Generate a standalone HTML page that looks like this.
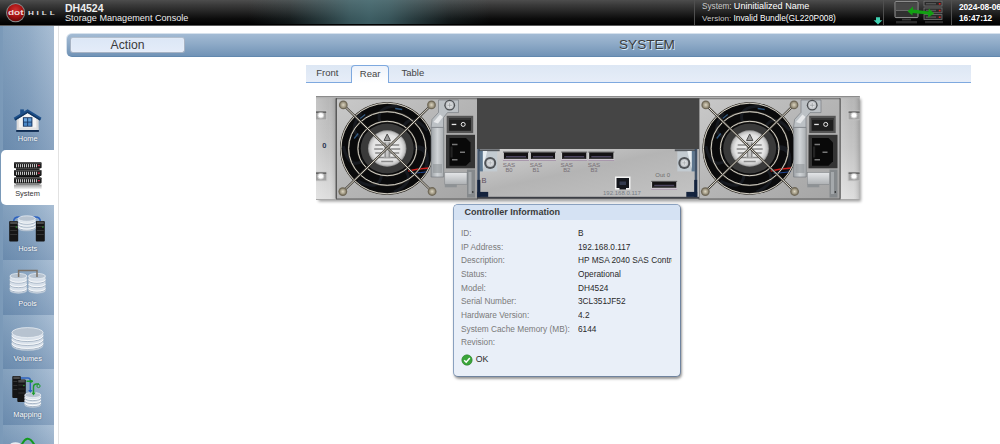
<!DOCTYPE html>
<html><head><meta charset="utf-8">
<style>
*{box-sizing:border-box;margin:0;padding:0}
html,body{width:1000px;height:444px;overflow:hidden;background:#fff;font-family:"Liberation Sans",sans-serif;}
#hdr{position:absolute;left:0;top:0;width:1000px;height:26px;border-bottom:1px solid #5a5a5a;background:linear-gradient(#4d4d4d 0%,#3a3a3a 20%,#262626 45%,#0c0c0c 75%,#000 100%);color:#fff;overflow:hidden}
#hdr .t1{position:absolute;left:65px;top:1.6px;font-size:10.5px;font-weight:bold;line-height:12px;color:#eee;white-space:nowrap}
#hdr .t2{position:absolute;left:65px;top:12.7px;font-size:9.1px;line-height:11px;color:#eee;white-space:nowrap}
.sep{position:absolute;top:0;width:1px;height:25px;background:#4f4f4f}
.hl{position:absolute;line-height:11px;white-space:nowrap}
#side{position:absolute;left:0;top:26px;width:54px;height:418px;background:linear-gradient(90deg,#7a99b8 0%,#8aa6c2 50%,#a5bbd2 100%);}
.nb{position:absolute;left:3px;width:51px;background:linear-gradient(rgba(255,255,255,.06),rgba(40,80,130,.22));}
#sel{position:absolute;left:1px;top:150px;width:57px;height:55px;background:#fff;border-radius:5px 0 0 5px}
#vline{position:absolute;left:58px;top:26px;width:1px;height:418px;background:#e2e2e2}
.nl{position:absolute;width:60px;text-align:center;font-size:7.4px;line-height:10px;white-space:nowrap}
#abar0{position:absolute;left:66px;top:33px;width:940px;height:24px;border-radius:6px;background:#a5bdd5;opacity:.45}
#abar{position:absolute;left:67px;top:34px;width:940px;height:23px;border-radius:5px;background:linear-gradient(#a3bbd4 0%,#8eaac7 45%,#7193b6 100%);border-bottom:1px solid #6288ae}
#abtn{position:absolute;left:70px;top:37px;width:115px;height:16px;border-radius:3px;background:linear-gradient(#dce7f6,#e4ecf9);border:1px solid #a7b3c4;border-top-color:#b3bfce;box-shadow:inset 0 0 1px #fff;text-align:center;font-size:12.2px;line-height:14.5px;color:#3a3a3a}
#stitle{position:absolute;left:597px;top:37px;width:100px;text-align:center;font-size:13.6px;line-height:16px;color:#3c3c3c;text-shadow:.7px .7px 0 #d8ecfb}
#tabs{position:absolute;left:306px;top:65px;width:665px;height:18px;background:linear-gradient(#dde7f4,#e6edf8);border-bottom:1px solid #7ea9df}
#atab{position:absolute;left:351px;top:65px;width:38px;height:18px;border:1px solid #7ea9df;border-bottom:none;border-radius:4px 4px 0 0;background:linear-gradient(#edf2fa,#fff)}
.tab{position:absolute;font-size:9.5px;line-height:11px;color:#444;white-space:nowrap}
#rear{position:absolute;left:316px;top:96px}
#pop{position:absolute;left:453px;top:204px;width:228px;height:173px;border:1px solid #8aa1bf;border-right-color:#6f839e;border-bottom-color:#6f839e;border-radius:5px;background:#e9eff8;box-shadow:1px 1.5px 2.5px rgba(0,0,0,.4);overflow:hidden}
#pop .h{height:15px;background:#d5e2f3;font-weight:bold;font-size:9.05px;line-height:14px;color:#3a3a3a;padding-left:10.5px;white-space:nowrap}
.row{position:absolute;left:7px;font-size:8.3px;line-height:10px;color:#7a7a7a;white-space:nowrap}
.val{position:absolute;left:124px;width:94px;overflow:hidden;font-size:8.3px;line-height:10px;color:#2a2a2a;white-space:nowrap}
</style></head><body>
<div id="hdr">
<svg style="position:absolute;left:0;top:0" width="62" height="25" viewBox="0 0 62 25">
<defs><radialGradient id="lg" cx=".5" cy=".35" r=".65"><stop offset="0" stop-color="#cf3030"/><stop offset=".6" stop-color="#a51212"/><stop offset="1" stop-color="#640909"/></radialGradient></defs>
<circle cx="15.6" cy="12.7" r="9.6" fill="#8a8a8a"/><circle cx="15.6" cy="12.7" r="8.6" fill="url(#lg)"/>
<text transform="translate(15.7,15.2) scale(1.32,1)" font-family="Liberation Sans, sans-serif" font-weight="bold" font-size="7.6" fill="#ecd6d6" text-anchor="middle">dot</text>
<g font-family="Liberation Sans, sans-serif" font-weight="bold" font-size="6" fill="#e4e4e4" text-anchor="middle"><text transform="translate(30.8,15) scale(1.35,1)">H</text><text transform="translate(37.6,15) scale(1.35,1)">I</text><text transform="translate(44.2,15) scale(1.35,1)">L</text><text transform="translate(52.2,15) scale(1.35,1)">L</text></g>
</svg>
<div style="position:absolute;left:248px;top:0;width:242px;height:24px;background:linear-gradient(90deg,rgba(83,129,137,0) 0,rgba(83,129,137,.14) 17%,rgba(83,129,137,.42) 32%,rgba(83,129,137,.63) 42%,rgba(83,129,137,.7) 50%,rgba(83,129,137,.63) 58%,rgba(83,129,137,.42) 68%,rgba(83,129,137,.14) 83%,rgba(83,129,137,0) 100%)"></div><div style="position:absolute;left:0;top:24px;width:1000px;height:1px;background:#000"></div><div class="t1">DH4524</div><div class="t2">Storage Management Console</div>
<div class="sep" style="left:694px"></div><div class="sep" style="left:883px"></div><div class="sep" style="left:951px"></div>
<div class="hl" style="left:702px;top:1px;font-size:8.2px;color:#c8c8c8">System: <span style="font-size:9.05px;color:#fff">Uninitialized Name</span></div>
<div class="hl" style="left:702px;top:12.6px;font-size:8.1px;color:#c8c8c8">Version: <span style="font-size:8.33px;color:#fff">Invalid Bundle(GL220P008)</span></div>
<svg style="position:absolute;left:873px;top:17px" width="10" height="8" viewBox="0 0 10 8"><path d="M3,0.3 h4 v3 h2.4 L5,7.6 L0.6,3.3 h2.4 z" fill="#3fd0b0"/></svg>
<svg style="position:absolute;left:890px;top:0" width="60" height="25" viewBox="0 0 60 25">
<rect x="5" y="1.6" width="23" height="16" rx="1" fill="#303030" stroke="#959595" stroke-width="1"/>
<rect x="6" y="2.6" width="21" height="7.5" fill="#484848"/><rect x="6" y="10" width="21" height="1" fill="#6a6a6a"/>
<rect x="12" y="18.8" width="9" height="1.6" fill="#3a3a3a"/><rect x="6" y="21" width="21" height="2.4" fill="#2c2c2c"/>
<g fill="#2b2b2b" stroke="#777" stroke-width=".8"><rect x="34" y="1.2" width="18" height="4.8"/><rect x="34" y="8" width="18" height="4.8"/><rect x="34" y="14.6" width="18" height="4.8"/></g>
<rect x="35" y="21" width="18" height="2.2" fill="#2c2c2c"/>
<g fill="#e02020"><rect x="48.8" y="3" width="1.8" height="1.6"/><rect x="48.8" y="9.8" width="1.8" height="1.6"/><rect x="48.8" y="16.4" width="1.8" height="1.6"/></g>
<g fill="#555"><rect x="36" y="3" width="10" height="1.4"/><rect x="36" y="9.8" width="10" height="1.4"/><rect x="36" y="16.4" width="10" height="1.4"/></g>
<path d="M17.5,11.2 L23,6.6 L23,9.6 L38.5,11.4 L38.8,8.6 L44.2,13.6 L38,17.6 L38.2,14.6 L22.6,12.9 L22.4,15.6 Z" fill="#12a012"/>
</svg>
<div class="hl" style="left:959px;top:1.5px;font-size:8.4px;color:#fff;font-weight:bold;letter-spacing:-.1px">2024-08-06</div>
<div class="hl" style="left:959px;top:13px;font-size:8.3px;color:#fff;font-weight:bold">16:47:12</div>
</div>
<div id="side">
<div class="nb" style="top:0;height:124px"></div>
<div class="nb" style="top:179px;height:54.5px"></div>
<div class="nb" style="top:233.5px;height:55px"></div>
<div class="nb" style="top:288.5px;height:54.5px"></div>
<div class="nb" style="top:343px;height:55.5px"></div>
<div class="nb" style="top:398.5px;height:40px"></div>
</div>
<div id="sel"></div>
<div id="vline"></div>
<svg style="position:absolute;left:0;top:0" width="60" height="444" viewBox="0 0 60 444">
<defs><linearGradient id="refl" x1="0" x2="0" y1="0" y2="1"><stop offset="0" stop-color="#999"/><stop offset="1" stop-color="#fff"/></linearGradient></defs>
<rect x="20.2" y="109.4" width="3.7" height="5" fill="#1c4f8a"/><path d="M16.8,119 L27.6,112.6 L38.4,119 V129.9 H16.8 Z" fill="#f3f3f3"/><path d="M16.8,119 h2 v10.9 h-2 z M36.4,119 h2 v10.9 h-2 z" fill="#cfcfcf" opacity=".7"/><path d="M16.8,127.5 H38.4 V129.9 H16.8 Z" fill="#dcdcdc" opacity=".7"/><path d="M27.6,109.2 L13.7,117.7 L15.3,120.4 L27.6,113 L39.9,120.4 L41.5,117.7 Z" fill="#1c4f8a"/><path d="M14.6,119.2 L15.3,120.4 L27.6,113 L39.9,120.4 L40.6,119.2 L27.6,111.6 Z" fill="#123660"/><rect x="16.2" y="130" width="22.7" height="1.9" fill="#0f2c52"/><rect x="22.9" y="117.2" width="9.5" height="9.5" fill="#1a3a66"/><rect x="23.9" y="118.2" width="3.3" height="3.4" fill="#6aa6e0"/><rect x="28.1" y="118.2" width="3.3" height="3.4" fill="#5f9dd8"/><rect x="23.9" y="122.5" width="3.3" height="3.3" fill="#4a88c6"/><rect x="28.1" y="122.5" width="3.3" height="3.3" fill="#4a88c6"/><rect x="14" y="162.3" width="27.6" height="6" rx="0.8" fill="#1c1c1c"/><rect x="14.4" y="162.5" width="26.8" height="1.1" fill="#4e4e4e"/><rect x="16.0" y="164.10000000000002" width="1" height="3.2" fill="#c4c4c4"/><rect x="18.0" y="164.10000000000002" width="1" height="3.2" fill="#c4c4c4"/><rect x="20.0" y="164.10000000000002" width="1" height="3.2" fill="#c4c4c4"/><rect x="22.0" y="164.10000000000002" width="1" height="3.2" fill="#c4c4c4"/><rect x="24.0" y="164.10000000000002" width="1" height="3.2" fill="#c4c4c4"/><rect x="26.0" y="164.10000000000002" width="1" height="3.2" fill="#c4c4c4"/><rect x="28.0" y="164.10000000000002" width="1" height="3.2" fill="#c4c4c4"/><rect x="30.0" y="164.10000000000002" width="1" height="3.2" fill="#c4c4c4"/><rect x="32.0" y="164.10000000000002" width="1" height="3.2" fill="#c4c4c4"/><rect x="34.0" y="164.10000000000002" width="1" height="3.2" fill="#c4c4c4"/><rect x="36.0" y="164.10000000000002" width="1" height="3.2" fill="#c4c4c4"/><rect x="37.9" y="164.9" width="1.9" height="1.3" fill="#d22f4c"/><rect x="16" y="168.3" width="23.6" height="1.6" fill="#0e0e0e"/><rect x="14" y="169.9" width="27.6" height="6" rx="0.8" fill="#1c1c1c"/><rect x="14.4" y="170.1" width="26.8" height="1.1" fill="#4e4e4e"/><rect x="16.0" y="171.70000000000002" width="1" height="3.2" fill="#c4c4c4"/><rect x="18.0" y="171.70000000000002" width="1" height="3.2" fill="#c4c4c4"/><rect x="20.0" y="171.70000000000002" width="1" height="3.2" fill="#c4c4c4"/><rect x="22.0" y="171.70000000000002" width="1" height="3.2" fill="#c4c4c4"/><rect x="24.0" y="171.70000000000002" width="1" height="3.2" fill="#c4c4c4"/><rect x="26.0" y="171.70000000000002" width="1" height="3.2" fill="#c4c4c4"/><rect x="28.0" y="171.70000000000002" width="1" height="3.2" fill="#c4c4c4"/><rect x="30.0" y="171.70000000000002" width="1" height="3.2" fill="#c4c4c4"/><rect x="32.0" y="171.70000000000002" width="1" height="3.2" fill="#c4c4c4"/><rect x="34.0" y="171.70000000000002" width="1" height="3.2" fill="#c4c4c4"/><rect x="36.0" y="171.70000000000002" width="1" height="3.2" fill="#c4c4c4"/><rect x="37.9" y="172.5" width="1.9" height="1.3" fill="#d22f4c"/><rect x="16" y="175.9" width="23.6" height="1.6" fill="#0e0e0e"/><rect x="14" y="177.4" width="27.6" height="6" rx="0.8" fill="#1c1c1c"/><rect x="14.4" y="177.6" width="26.8" height="1.1" fill="#4e4e4e"/><rect x="16.0" y="179.20000000000002" width="1" height="3.2" fill="#c4c4c4"/><rect x="18.0" y="179.20000000000002" width="1" height="3.2" fill="#c4c4c4"/><rect x="20.0" y="179.20000000000002" width="1" height="3.2" fill="#c4c4c4"/><rect x="22.0" y="179.20000000000002" width="1" height="3.2" fill="#c4c4c4"/><rect x="24.0" y="179.20000000000002" width="1" height="3.2" fill="#c4c4c4"/><rect x="26.0" y="179.20000000000002" width="1" height="3.2" fill="#c4c4c4"/><rect x="28.0" y="179.20000000000002" width="1" height="3.2" fill="#c4c4c4"/><rect x="30.0" y="179.20000000000002" width="1" height="3.2" fill="#c4c4c4"/><rect x="32.0" y="179.20000000000002" width="1" height="3.2" fill="#c4c4c4"/><rect x="34.0" y="179.20000000000002" width="1" height="3.2" fill="#c4c4c4"/><rect x="36.0" y="179.20000000000002" width="1" height="3.2" fill="#c4c4c4"/><rect x="37.9" y="180.0" width="1.9" height="1.3" fill="#d22f4c"/><rect x="16" y="183.4" width="23.6" height="1.6" fill="#777"/><rect x="14" y="184.6" width="27.6" height="5" fill="url(#refl)"/><path d="M13.7,221.5 q0,-4.5 5,-4.5 h3" fill="none" stroke="#2d62c0" stroke-width="1.6"/><path d="M40.3,221.5 q0,-4.5 -5,-4.5 h-3" fill="none" stroke="#2d62c0" stroke-width="1.6"/><rect x="9.2" y="221" width="9" height="20.5" rx="1" fill="#151515"/><rect x="10.2" y="221.5" width="7" height="2.5" fill="#4a4a4a"/><rect x="10.2" y="226" width="7" height="1" fill="#333"/><rect x="10.2" y="230" width="7" height="1" fill="#333"/><rect x="10.2" y="234" width="7" height="1" fill="#333"/><rect x="15.7" y="226.5" width="1.2" height="1.2" fill="#3a3"/><rect x="35.8" y="221" width="9" height="20.5" rx="1" fill="#151515"/><rect x="36.8" y="221.5" width="7" height="2.5" fill="#4a4a4a"/><rect x="36.8" y="226" width="7" height="1" fill="#333"/><rect x="36.8" y="230" width="7" height="1" fill="#333"/><rect x="36.8" y="234" width="7" height="1" fill="#333"/><rect x="42.3" y="226.5" width="1.2" height="1.2" fill="#3a3"/><path d="M18.2,218.55200000000002 v9.696 a8.6,2.752 0 0 0 17.2,0 v-9.696 z" fill="#dfe6ee" stroke="#b9c4d0" stroke-width=".5" opacity=".93"/><path d="M18.2,221.49018181818184 a8.6,2.752 0 0 0 17.2,0" fill="none" stroke="#a9b7c7" stroke-width="1"/><path d="M18.2,220.49018181818184 a8.6,2.752 0 0 0 17.2,0" fill="none" stroke="#fff" stroke-width=".8"/><path d="M18.2,224.42836363636366 a8.6,2.752 0 0 0 17.2,0" fill="none" stroke="#a9b7c7" stroke-width="1"/><path d="M18.2,223.42836363636366 a8.6,2.752 0 0 0 17.2,0" fill="none" stroke="#fff" stroke-width=".8"/><path d="M18.2,227.36654545454547 a8.6,2.752 0 0 0 17.2,0" fill="none" stroke="#a9b7c7" stroke-width="1"/><path d="M18.2,226.36654545454547 a8.6,2.752 0 0 0 17.2,0" fill="none" stroke="#fff" stroke-width=".8"/><ellipse cx="26.799999999999997" cy="218.55200000000002" rx="8.6" ry="2.752" fill="#b7c3d0" stroke="#eef2f6" stroke-width=".7"/><path d="M18.6,278 V270.6 H37 V278" fill="none" stroke="#7a7066" stroke-width="1.5"/><path d="M10,276.08799999999997 v14.623999999999999 a8.4,2.688 0 0 0 16.8,0 v-14.623999999999999 z" fill="#dfe6ee" stroke="#b9c4d0" stroke-width=".5" opacity=".93"/><path d="M10,280.5195151515151 a8.4,2.688 0 0 0 16.8,0" fill="none" stroke="#a9b7c7" stroke-width="1"/><path d="M10,279.5195151515151 a8.4,2.688 0 0 0 16.8,0" fill="none" stroke="#fff" stroke-width=".8"/><path d="M10,284.9510303030303 a8.4,2.688 0 0 0 16.8,0" fill="none" stroke="#a9b7c7" stroke-width="1"/><path d="M10,283.9510303030303 a8.4,2.688 0 0 0 16.8,0" fill="none" stroke="#fff" stroke-width=".8"/><path d="M10,289.38254545454544 a8.4,2.688 0 0 0 16.8,0" fill="none" stroke="#a9b7c7" stroke-width="1"/><path d="M10,288.38254545454544 a8.4,2.688 0 0 0 16.8,0" fill="none" stroke="#fff" stroke-width=".8"/><ellipse cx="18.4" cy="276.08799999999997" rx="8.4" ry="2.688" fill="#b7c3d0" stroke="#eef2f6" stroke-width=".7"/><path d="M28.6,276.08799999999997 v14.623999999999999 a8.4,2.688 0 0 0 16.8,0 v-14.623999999999999 z" fill="#dfe6ee" stroke="#b9c4d0" stroke-width=".5" opacity=".93"/><path d="M28.6,280.5195151515151 a8.4,2.688 0 0 0 16.8,0" fill="none" stroke="#a9b7c7" stroke-width="1"/><path d="M28.6,279.5195151515151 a8.4,2.688 0 0 0 16.8,0" fill="none" stroke="#fff" stroke-width=".8"/><path d="M28.6,284.9510303030303 a8.4,2.688 0 0 0 16.8,0" fill="none" stroke="#a9b7c7" stroke-width="1"/><path d="M28.6,283.9510303030303 a8.4,2.688 0 0 0 16.8,0" fill="none" stroke="#fff" stroke-width=".8"/><path d="M28.6,289.38254545454544 a8.4,2.688 0 0 0 16.8,0" fill="none" stroke="#a9b7c7" stroke-width="1"/><path d="M28.6,288.38254545454544 a8.4,2.688 0 0 0 16.8,0" fill="none" stroke="#fff" stroke-width=".8"/><ellipse cx="37.0" cy="276.08799999999997" rx="8.4" ry="2.688" fill="#b7c3d0" stroke="#eef2f6" stroke-width=".7"/><path d="M18.6,277 V273 M37,277 V273" stroke="#7a7066" stroke-width="1.5"/><path d="M11.9,332.59200000000004 v13.016 a15.6,4.992 0 0 0 31.2,0 v-13.016 z" fill="#dfe6ee" stroke="#b9c4d0" stroke-width=".5" opacity=".93"/><path d="M11.9,336.53624242424246 a15.6,4.992 0 0 0 31.2,0" fill="none" stroke="#a9b7c7" stroke-width="1"/><path d="M11.9,335.53624242424246 a15.6,4.992 0 0 0 31.2,0" fill="none" stroke="#fff" stroke-width=".8"/><path d="M11.9,340.4804848484849 a15.6,4.992 0 0 0 31.2,0" fill="none" stroke="#a9b7c7" stroke-width="1"/><path d="M11.9,339.4804848484849 a15.6,4.992 0 0 0 31.2,0" fill="none" stroke="#fff" stroke-width=".8"/><path d="M11.9,344.4247272727273 a15.6,4.992 0 0 0 31.2,0" fill="none" stroke="#a9b7c7" stroke-width="1"/><path d="M11.9,343.4247272727273 a15.6,4.992 0 0 0 31.2,0" fill="none" stroke="#fff" stroke-width=".8"/><ellipse cx="27.5" cy="332.59200000000004" rx="15.6" ry="4.992" fill="#b7c3d0" stroke="#eef2f6" stroke-width=".7"/><rect x="12.3" y="376" width="8.5" height="22" rx="1" fill="#151515"/><rect x="13.3" y="376.5" width="6.5" height="2.5" fill="#4a4a4a"/><rect x="13.3" y="381" width="6.5" height="1" fill="#333"/><rect x="13.3" y="385" width="6.5" height="1" fill="#333"/><rect x="13.3" y="389" width="6.5" height="1" fill="#333"/><rect x="18.3" y="381.5" width="1.2" height="1.2" fill="#3a3"/><rect x="17.3" y="379.5" width="8.5" height="22.5" rx="1" fill="#151515"/><rect x="18.3" y="380.0" width="6.5" height="2.5" fill="#4a4a4a"/><rect x="18.3" y="384.5" width="6.5" height="1" fill="#333"/><rect x="18.3" y="388.5" width="6.5" height="1" fill="#333"/><rect x="18.3" y="392.5" width="6.5" height="1" fill="#333"/><rect x="23.3" y="385.0" width="1.2" height="1.2" fill="#3a3"/><path d="M24.8,395.06 v9.879999999999999 a8.0,2.56 0 0 0 16,0 v-9.879999999999999 z" fill="#dfe6ee" stroke="#b9c4d0" stroke-width=".5" opacity=".93"/><path d="M24.8,398.0539393939394 a8.0,2.56 0 0 0 16,0" fill="none" stroke="#a9b7c7" stroke-width="1"/><path d="M24.8,397.0539393939394 a8.0,2.56 0 0 0 16,0" fill="none" stroke="#fff" stroke-width=".8"/><path d="M24.8,401.0478787878788 a8.0,2.56 0 0 0 16,0" fill="none" stroke="#a9b7c7" stroke-width="1"/><path d="M24.8,400.0478787878788 a8.0,2.56 0 0 0 16,0" fill="none" stroke="#fff" stroke-width=".8"/><path d="M24.8,404.0418181818182 a8.0,2.56 0 0 0 16,0" fill="none" stroke="#a9b7c7" stroke-width="1"/><path d="M24.8,403.0418181818182 a8.0,2.56 0 0 0 16,0" fill="none" stroke="#fff" stroke-width=".8"/><ellipse cx="32.8" cy="395.06" rx="8.0" ry="2.56" fill="#b7c3d0" stroke="#eef2f6" stroke-width=".7"/><path d="M21,378 h7 q2.3,0 2.3,2.3 V391" fill="none" stroke="#2d62c0" stroke-width="1.4"/><path d="M28.2,390 l2.1,3 l2.1,-3 z" fill="#2d62c0"/><path d="M26.5,381.3 h6.5 M33.5,394 V387 q0,-3 3,-3 h2.5" fill="none" stroke="#1e9a2e" stroke-width="1.4"/><path d="M31.4,392.5 l2.1,3 l2.1,-3 z" fill="#1e9a2e"/><circle cx="38.5" cy="386" r="1.6" fill="none" stroke="#1e9a2e" stroke-width="1"/><circle cx="31" cy="381.3" r="1.5" fill="#1e9a2e"/><ellipse cx="15.5" cy="445" rx="5.5" ry="2.8" fill="#e9edf2"/><path d="M20.3,448 Q27,430.5 35,446" fill="none" stroke="#149a1e" stroke-width="2"/>
</svg>
<div class="nl" style="left:-2.3000000000000007px;top:133.7px;color:#fff;text-shadow:0 0 1.5px rgba(30,50,80,.8);">Home</div>
<div class="nl" style="left:-2.5px;top:189.0px;color:#333;">System</div>
<div class="nl" style="left:-2.3000000000000007px;top:243.9px;color:#fff;text-shadow:0 0 1.5px rgba(30,50,80,.8);">Hosts</div>
<div class="nl" style="left:-2.5px;top:298.9px;color:#fff;text-shadow:0 0 1.5px rgba(30,50,80,.8);">Pools</div>
<div class="nl" style="left:-2.3000000000000007px;top:353.9px;color:#fff;text-shadow:0 0 1.5px rgba(30,50,80,.8);">Volumes</div>
<div class="nl" style="left:-2.5px;top:410.1px;color:#fff;text-shadow:0 0 1.5px rgba(30,50,80,.8);">Mapping</div>

<div id="abar0"></div><div id="abar"></div>
<div id="abtn">Action</div>
<div id="stitle">SYSTEM</div>
<div id="tabs"></div><div id="atab"></div>
<div class="tab" style="left:316.3px;top:67px">Front</div>
<div class="tab" style="left:359.8px;top:67.5px">Rear</div>
<div class="tab" style="left:401.5px;top:67px">Table</div>
<svg id="rear" width="560" height="112" viewBox="0 0 560 112">
<defs>
<linearGradient id="earv" x1="0" x2="0" y1="0" y2="1"><stop offset="0" stop-color="#b6b6b6"/><stop offset=".5" stop-color="#c4c4c4"/><stop offset="1" stop-color="#dedede"/></linearGradient>
<linearGradient id="earh" x1="0" x2="1" y1="0" y2="0"><stop offset="0" stop-color="#fff" stop-opacity=".18"/><stop offset=".6" stop-color="#fff" stop-opacity="0"/><stop offset="1" stop-color="#000" stop-opacity=".16"/></linearGradient>
<linearGradient id="psubg" x1="0" x2="1" y1="0" y2="1"><stop offset="0" stop-color="#c9c9c9"/><stop offset=".5" stop-color="#b5b5b5"/><stop offset="1" stop-color="#a4a4a4"/></linearGradient>
<linearGradient id="ctl" x1="0" x2="1" y1="0" y2="1"><stop offset="0" stop-color="#d4d4d4"/><stop offset=".45" stop-color="#b4b4b4"/><stop offset="1" stop-color="#c4c4c4"/></linearGradient>
<radialGradient id="hub"><stop offset="0" stop-color="#f4f4f4"/><stop offset=".8" stop-color="#e2e2e2"/><stop offset="1" stop-color="#bbb"/></radialGradient>
<radialGradient id="screw"><stop offset="0" stop-color="#ddd6c2"/><stop offset="1" stop-color="#8f8772"/></radialGradient>
<radialGradient id="screw2"><stop offset="0" stop-color="#fff"/><stop offset="1" stop-color="#b8bcc0"/></radialGradient>
<linearGradient id="brk" x1="0" x2="1"><stop offset="0" stop-color="#9da2a6"/><stop offset=".5" stop-color="#d0d4d7"/><stop offset="1" stop-color="#a9adb0"/></linearGradient>
<linearGradient id="latch" x1="0" x2="0" y1="0" y2="1"><stop offset="0" stop-color="#e4e6e8"/><stop offset="1" stop-color="#aeb1b4"/></linearGradient>
<filter id="sh" x="-5%" y="-5%" width="110%" height="120%"><feGaussianBlur stdDeviation="1.5"/></filter>
</defs>
<rect x="2.5" y="3" width="542.5" height="102.5" fill="#000" opacity=".38" filter="url(#sh)"/>
<rect x="0" y="0" width="543.6" height="104" fill="url(#earv)"/>
<rect x="0" y="0" width="20.5" height="104" fill="url(#earh)"/>
<rect x="524" y="0" width="19.600000000000023" height="104" fill="url(#earh)"/>
<rect x="0" y="0" width="543.6" height="1.3" fill="#808080"/>
<rect x="0" y="103" width="543.6" height="1" fill="#a8a8a8"/>
<rect x="0" y="14.6" width="11.2" height="9.6" fill="#c9c9c9"/><rect x="0" y="15.4" width="10.2" height="8" fill="#a2a2a2"/><rect x="0" y="15.4" width="10.2" height="1.6" fill="#666"/><circle cx="4.8" cy="19.2" r="3.3" fill="#fff" opacity=".5"/><circle cx="4.8" cy="19.2" r="2.3" fill="#fff"/>
<rect x="0" y="75.6" width="11.2" height="9.6" fill="#c9c9c9"/><rect x="0" y="76.39999999999999" width="10.2" height="8" fill="#a2a2a2"/><rect x="0" y="76.39999999999999" width="10.2" height="1.6" fill="#666"/><circle cx="4.8" cy="80.19999999999999" r="3.3" fill="#fff" opacity=".5"/><circle cx="4.8" cy="80.19999999999999" r="2.3" fill="#fff"/>
<rect x="531.6" y="14.6" width="12.0" height="9.6" fill="#c9c9c9"/><rect x="532.6" y="15.4" width="11.0" height="8" fill="#a2a2a2"/><rect x="532.6" y="15.4" width="11.0" height="1.6" fill="#666"/><circle cx="538.0" cy="19.2" r="3.3" fill="#fff" opacity=".5"/><circle cx="538.0" cy="19.2" r="2.3" fill="#fff"/>
<rect x="531.6" y="75.6" width="12.0" height="9.6" fill="#c9c9c9"/><rect x="532.6" y="76.39999999999999" width="11.0" height="8" fill="#a2a2a2"/><rect x="532.6" y="76.39999999999999" width="11.0" height="1.6" fill="#666"/><circle cx="538.0" cy="80.19999999999999" r="3.3" fill="#fff" opacity=".5"/><circle cx="538.0" cy="80.19999999999999" r="2.3" fill="#fff"/>
<text x="8.3" y="52.4" font-family="Liberation Sans, sans-serif" font-size="7.5" font-weight="bold" fill="#2c3550" text-anchor="middle">0</text>
<rect x="19.7" y="1" width="504.7" height="101.6" fill="#2e2e2e"/>
<rect x="20.5" y="1" width="141" height="102" fill="url(#psubg)"/>
<rect x="20.5" y="1" width="141" height="102" fill="none" stroke="#5a5a5a" stroke-width="1"/>
<rect x="21.5" y="1.8" width="139" height="1" fill="#dcdcdc" opacity=".7"/>
<ellipse cx="71.2" cy="52.5" rx="47" ry="46" fill="#0a0a0b"/>
<path d="M98.2,52.5 Q115.2,50.8 109.3,74.5" stroke="#171a20" stroke-width="3" fill="none"/>
<path d="M88.2,73.5 Q100.2,85.6 78.1,96.0" stroke="#171a20" stroke-width="3" fill="none"/>
<path d="M65.6,78.9 Q63.7,95.9 41.8,85.2" stroke="#171a20" stroke-width="3" fill="none"/>
<path d="M47.1,64.8 Q32.8,74.0 27.3,50.2" stroke="#171a20" stroke-width="3" fill="none"/>
<path d="M46.5,41.5 Q30.3,36.2 45.3,16.9" stroke="#171a20" stroke-width="3" fill="none"/>
<path d="M64.2,26.4 Q58.2,10.5 82.6,10.0" stroke="#171a20" stroke-width="3" fill="none"/>
<path d="M87.1,30.7 Q95.7,15.9 111.4,34.6" stroke="#171a20" stroke-width="3" fill="none"/>
<path d="M98.2,51.1 Q115.0,48.5 110.4,72.5" stroke="#171a20" stroke-width="3" fill="none"/>
<path d="M44.2,22.5 l5,-4 M38.2,42.5 l4,-5 M79.2,12.5 l7,1" stroke="#3b6a9a" stroke-width="1.3" opacity=".8"/>
<ellipse cx="71.2" cy="52.5" rx="26.5" ry="25" fill="#3a3a3a"/>
<ellipse cx="71.2" cy="52.5" rx="19.2" ry="18.2" fill="#9a9a9a"/>
<ellipse cx="71.2" cy="52.5" rx="18.3" ry="17.3" fill="url(#hub)"/>
<path d="M68.0,44.5 l3.2,-6.5 l3.2,6.5 z" fill="#999" stroke="#444" stroke-width="0.9"/>
<path d="M59.2,49.0 h24 M58.2,53.0 h9 M74.2,53.0 h10 M59.2,57.0 h8 M73.2,57.0 h10 M62.2,61.5 h18 M65.2,65.5 h12" stroke="#8a8a8a" stroke-width="1.3" fill="none"/>
<rect x="67.8" y="45.5" width="6.8" height="17" fill="#b5b5b5" opacity=".7"/>
<path d="M69.2,46.5 v15 M73.2,46.5 v15" stroke="#777" stroke-width=".9"/>
<path d="M92.2,75.0 q10,-2.5 21,-3" stroke="#d6201c" stroke-width="1.7" fill="none"/>
<path d="M95.2,77.5 q10,-1 17,-1.8" stroke="#234a9a" stroke-width="1" fill="none"/>
<ellipse cx="71.2" cy="52.5" rx="46.3" ry="45.3" fill="none" stroke="#3f3b35" stroke-width="1.7"/>
<ellipse cx="71.2" cy="52.5" rx="46.3" ry="45.3" fill="none" stroke="#e4e1d6" stroke-width="0.9"/>
<ellipse cx="71.2" cy="52.5" rx="38.6" ry="36.8" fill="none" stroke="#3f3b35" stroke-width="1.7"/>
<ellipse cx="71.2" cy="52.5" rx="38.6" ry="36.8" fill="none" stroke="#e4e1d6" stroke-width="0.9"/>
<ellipse cx="71.2" cy="52.5" rx="29.3" ry="27.2" fill="none" stroke="#3f3b35" stroke-width="1.7"/>
<ellipse cx="71.2" cy="52.5" rx="29.3" ry="27.2" fill="none" stroke="#e4e1d6" stroke-width="0.9"/>
<line x1="27.3" y1="8.9" x2="116.1" y2="95.5" stroke="#3f3b35" stroke-width="2.2"/>
<line x1="27.3" y1="8.9" x2="116.1" y2="95.5" stroke="#e4e1d6" stroke-width="1.0"/>
<line x1="115.5" y1="8.9" x2="26.8" y2="95.6" stroke="#3f3b35" stroke-width="2.2"/>
<line x1="115.5" y1="8.9" x2="26.8" y2="95.6" stroke="#e4e1d6" stroke-width="1.0"/>
<circle cx="27.3" cy="8.9" r="4.4" fill="#6f6858"/>
<circle cx="27.3" cy="8.9" r="3.2" fill="url(#screw)"/>
<circle cx="115.5" cy="8.9" r="4.4" fill="#6f6858"/>
<circle cx="115.5" cy="8.9" r="3.2" fill="url(#screw)"/>
<circle cx="26.8" cy="95.6" r="4.4" fill="#6f6858"/>
<circle cx="26.8" cy="95.6" r="3.2" fill="url(#screw)"/>
<circle cx="116.1" cy="95.5" r="4.4" fill="#6f6858"/>
<circle cx="116.1" cy="95.5" r="3.2" fill="url(#screw)"/>
<path d="M115.1,31.4 h12.6 v49.6 h-12.6 z" fill="url(#brk)" stroke="#6f7478" stroke-width="0.6"/>
<rect x="117.0" y="68" width="9" height="9" fill="#8f9498" opacity=".6"/>
<path d="M115.1,31.4 l1,-8 l6.4,-7 v-12.4 h20 v12.6 h-11 l-4,5 v9.8 z" fill="#bcc1c5" stroke="#6f7478" stroke-width="0.6"/>
<path d="M117.5,26 l6.5,-7.5 l3,2.6 l-5,6.3 z" fill="#e6e8ea"/>
<circle cx="133.7" cy="9.2" r="5.4" fill="#4a4d50"/>
<circle cx="133.7" cy="9.2" r="4.1" fill="url(#screw2)"/>
<path d="M131.5,9.2 h4.4 M133.7,7 v4.4" stroke="#8d9296" stroke-width="0.8"/>
<rect x="130.7" y="19.8" width="26.5" height="17.3" fill="#555"/>
<rect x="133.1" y="22" width="21.8" height="12.8" fill="#1e1e1e"/>
<rect x="133.1" y="22" width="21.8" height="2" fill="#333"/>
<rect x="135.7" y="27.8" width="4.6" height="1.3" fill="#e4e4e4"/>
<circle cx="147.2" cy="28.4" r="2" fill="none" stroke="#eee" stroke-width="1"/>
<rect x="130.0" y="38.8" width="29" height="33.5" fill="#343434"/>
<path d="M133.5,42 h16.5 l4.5,4.5 v18.8 l-4.5,4.5 h-16.5 z" fill="#090909"/>
<path d="M136.0,48.6 h5.5 M144.0,56.2 h5 M136.0,63.8 h5.5" stroke="#777" stroke-width="1.5"/>
<rect x="134.5" y="50.5" width="2.2" height="11" fill="#222"/>
<rect x="151.0" y="73.5" width="8" height="28" fill="#85898c"/>
<rect x="152.5" y="76" width="3" height="22" fill="#a5a9ac"/>
<rect x="128.8" y="76.7" width="22.2" height="11.6" fill="url(#latch)" stroke="#7e8286" stroke-width="0.5"/>
<rect x="128.8" y="88.3" width="12" height="3" fill="#8e9295"/>
<circle cx="156.8" cy="96" r=".8" fill="#111"/>
<rect x="383" y="1" width="141" height="102" fill="url(#psubg)"/>
<rect x="383" y="1" width="141" height="102" fill="none" stroke="#5a5a5a" stroke-width="1"/>
<rect x="384" y="1.8" width="139" height="1" fill="#dcdcdc" opacity=".7"/>
<ellipse cx="433.7" cy="52.5" rx="47" ry="46" fill="#0a0a0b"/>
<path d="M460.7,52.5 Q477.7,50.8 471.8,74.5" stroke="#171a20" stroke-width="3" fill="none"/>
<path d="M450.7,73.5 Q462.7,85.6 440.6,96.0" stroke="#171a20" stroke-width="3" fill="none"/>
<path d="M428.1,78.9 Q426.2,95.9 404.3,85.2" stroke="#171a20" stroke-width="3" fill="none"/>
<path d="M409.6,64.8 Q395.3,74.0 389.8,50.2" stroke="#171a20" stroke-width="3" fill="none"/>
<path d="M409.0,41.5 Q392.8,36.2 407.8,16.9" stroke="#171a20" stroke-width="3" fill="none"/>
<path d="M426.7,26.4 Q420.7,10.5 445.1,10.0" stroke="#171a20" stroke-width="3" fill="none"/>
<path d="M449.6,30.7 Q458.2,15.9 473.9,34.6" stroke="#171a20" stroke-width="3" fill="none"/>
<path d="M460.7,51.1 Q477.5,48.5 472.9,72.5" stroke="#171a20" stroke-width="3" fill="none"/>
<path d="M406.7,22.5 l5,-4 M400.7,42.5 l4,-5 M441.7,12.5 l7,1" stroke="#3b6a9a" stroke-width="1.3" opacity=".8"/>
<ellipse cx="433.7" cy="52.5" rx="26.5" ry="25" fill="#3a3a3a"/>
<ellipse cx="433.7" cy="52.5" rx="19.2" ry="18.2" fill="#9a9a9a"/>
<ellipse cx="433.7" cy="52.5" rx="18.3" ry="17.3" fill="url(#hub)"/>
<path d="M430.5,44.5 l3.2,-6.5 l3.2,6.5 z" fill="#999" stroke="#444" stroke-width="0.9"/>
<path d="M421.7,49.0 h24 M420.7,53.0 h9 M436.7,53.0 h10 M421.7,57.0 h8 M435.7,57.0 h10 M424.7,61.5 h18 M427.7,65.5 h12" stroke="#8a8a8a" stroke-width="1.3" fill="none"/>
<rect x="430.3" y="45.5" width="6.8" height="17" fill="#b5b5b5" opacity=".7"/>
<path d="M431.7,46.5 v15 M435.7,46.5 v15" stroke="#777" stroke-width=".9"/>
<path d="M454.7,75.0 q10,-2.5 21,-3" stroke="#d6201c" stroke-width="1.7" fill="none"/>
<path d="M457.7,77.5 q10,-1 17,-1.8" stroke="#234a9a" stroke-width="1" fill="none"/>
<ellipse cx="433.7" cy="52.5" rx="46.3" ry="45.3" fill="none" stroke="#3f3b35" stroke-width="1.7"/>
<ellipse cx="433.7" cy="52.5" rx="46.3" ry="45.3" fill="none" stroke="#e4e1d6" stroke-width="0.9"/>
<ellipse cx="433.7" cy="52.5" rx="38.6" ry="36.8" fill="none" stroke="#3f3b35" stroke-width="1.7"/>
<ellipse cx="433.7" cy="52.5" rx="38.6" ry="36.8" fill="none" stroke="#e4e1d6" stroke-width="0.9"/>
<ellipse cx="433.7" cy="52.5" rx="29.3" ry="27.2" fill="none" stroke="#3f3b35" stroke-width="1.7"/>
<ellipse cx="433.7" cy="52.5" rx="29.3" ry="27.2" fill="none" stroke="#e4e1d6" stroke-width="0.9"/>
<line x1="389.8" y1="8.9" x2="478.6" y2="95.5" stroke="#3f3b35" stroke-width="2.2"/>
<line x1="389.8" y1="8.9" x2="478.6" y2="95.5" stroke="#e4e1d6" stroke-width="1.0"/>
<line x1="478.0" y1="8.9" x2="389.3" y2="95.6" stroke="#3f3b35" stroke-width="2.2"/>
<line x1="478.0" y1="8.9" x2="389.3" y2="95.6" stroke="#e4e1d6" stroke-width="1.0"/>
<circle cx="389.8" cy="8.9" r="4.4" fill="#6f6858"/>
<circle cx="389.8" cy="8.9" r="3.2" fill="url(#screw)"/>
<circle cx="478.0" cy="8.9" r="4.4" fill="#6f6858"/>
<circle cx="478.0" cy="8.9" r="3.2" fill="url(#screw)"/>
<circle cx="389.3" cy="95.6" r="4.4" fill="#6f6858"/>
<circle cx="389.3" cy="95.6" r="3.2" fill="url(#screw)"/>
<circle cx="478.6" cy="95.5" r="4.4" fill="#6f6858"/>
<circle cx="478.6" cy="95.5" r="3.2" fill="url(#screw)"/>
<path d="M477.6,31.4 h12.6 v49.6 h-12.6 z" fill="url(#brk)" stroke="#6f7478" stroke-width="0.6"/>
<rect x="479.5" y="68" width="9" height="9" fill="#8f9498" opacity=".6"/>
<path d="M477.6,31.4 l1,-8 l6.4,-7 v-12.4 h20 v12.6 h-11 l-4,5 v9.8 z" fill="#bcc1c5" stroke="#6f7478" stroke-width="0.6"/>
<path d="M480,26 l6.5,-7.5 l3,2.6 l-5,6.3 z" fill="#e6e8ea"/>
<circle cx="496.2" cy="9.2" r="5.4" fill="#4a4d50"/>
<circle cx="496.2" cy="9.2" r="4.1" fill="url(#screw2)"/>
<path d="M494,9.2 h4.4 M496.2,7 v4.4" stroke="#8d9296" stroke-width="0.8"/>
<rect x="493.2" y="19.8" width="26.5" height="17.3" fill="#555"/>
<rect x="495.6" y="22" width="21.8" height="12.8" fill="#1e1e1e"/>
<rect x="495.6" y="22" width="21.8" height="2" fill="#333"/>
<rect x="498.2" y="27.8" width="4.6" height="1.3" fill="#e4e4e4"/>
<circle cx="509.7" cy="28.4" r="2" fill="none" stroke="#eee" stroke-width="1"/>
<rect x="492.5" y="38.8" width="29" height="33.5" fill="#343434"/>
<path d="M496,42 h16.5 l4.5,4.5 v18.8 l-4.5,4.5 h-16.5 z" fill="#090909"/>
<path d="M498.5,48.6 h5.5 M506.5,56.2 h5 M498.5,63.8 h5.5" stroke="#777" stroke-width="1.5"/>
<rect x="497" y="50.5" width="2.2" height="11" fill="#222"/>
<rect x="513.5" y="73.5" width="8" height="28" fill="#85898c"/>
<rect x="515" y="76" width="3" height="22" fill="#a5a9ac"/>
<rect x="491.3" y="76.7" width="22.2" height="11.6" fill="url(#latch)" stroke="#7e8286" stroke-width="0.5"/>
<rect x="491.3" y="88.3" width="12" height="3" fill="#8e9295"/>
<circle cx="519.3" cy="96" r=".8" fill="#111"/>
<rect x="161" y="1" width="222" height="52" fill="#454545"/>
<rect x="161" y="1" width="222" height="1" fill="#5a5a5a"/>
<rect x="161" y="53" width="222" height="48.5" fill="url(#ctl)"/>
<rect x="161" y="100.8" width="222" height="1.7" fill="#3c3f46"/>
<rect x="163.7" y="54.900000000000006" width="17.5" height="20.5" fill="#c3cbd1"/><rect x="163.0" y="53.300000000000004" width="20.7" height="1.9" fill="#55595e"/><rect x="163.7" y="54.900000000000006" width="3.2" height="20.5" fill="#4b6782" opacity=".85"/><path d="M166.89999999999998,54.900000000000006 L171.2,54.900000000000006 L166.89999999999998,72.9 z" fill="#e8eef2"/><rect x="161.29999999999998" y="52.900000000000006" width="2.5" height="48" fill="#2b3f58" opacity=".85"/><rect x="161.29999999999998" y="95.9" width="10.9" height="5" fill="#14233d"/><rect x="161.29999999999998" y="83.9" width="3" height="17" fill="#14233d"/><circle cx="174.2" cy="66.9" r="6" fill="#505357"/><circle cx="174.2" cy="66.9" r="4" fill="url(#screw2)"/><path d="M172.2,66.9 h4 M174.2,64.9 v4" stroke="#9a9ea2" stroke-width="0.7"/>
<rect x="361.3" y="54.900000000000006" width="17.5" height="20.5" fill="#c3cbd1"/><rect x="358.8" y="53.300000000000004" width="20.7" height="1.9" fill="#55595e"/><rect x="375.6" y="54.900000000000006" width="3.2" height="20.5" fill="#4b6782" opacity=".85"/><path d="M375.6,54.900000000000006 L371.3,54.900000000000006 L375.6,72.9 z" fill="#e8eef2"/><rect x="378.7" y="52.900000000000006" width="2.5" height="48" fill="#2b3f58" opacity=".85"/><rect x="370.3" y="95.9" width="10.9" height="5" fill="#14233d"/><rect x="378.2" y="83.9" width="3" height="17" fill="#14233d"/><circle cx="368.3" cy="66.9" r="6" fill="#505357"/><circle cx="368.3" cy="66.9" r="4" fill="url(#screw2)"/><path d="M366.3,66.9 h4 M368.3,64.9 v4" stroke="#9a9ea2" stroke-width="0.7"/>
<rect x="187" y="55.5" width="26" height="9.5" fill="#d2d2d2"/><rect x="187" y="55.5" width="26" height="1.2" fill="#6a6a6a"/><rect x="187.9" y="56.5" width="24.2" height="6.7" fill="#141214"/><rect x="190" y="60.0" width="20" height="1.5" fill="#4d4660"/><rect x="188.5" y="61.8" width="23" height="1.2" fill="#3a3a3a"/><rect x="187" y="63.1" width="26" height="1.9" fill="#a898ac"/><rect x="187" y="63.1" width="26" height="0.8" fill="#dcd6dc"/>
<rect x="214" y="55.5" width="26" height="9.5" fill="#d2d2d2"/><rect x="214" y="55.5" width="26" height="1.2" fill="#6a6a6a"/><rect x="214.9" y="56.5" width="24.2" height="6.7" fill="#141214"/><rect x="217" y="60.0" width="20" height="1.5" fill="#4d4660"/><rect x="215.5" y="61.8" width="23" height="1.2" fill="#3a3a3a"/><rect x="214" y="63.1" width="26" height="1.9" fill="#a898ac"/><rect x="214" y="63.1" width="26" height="0.8" fill="#dcd6dc"/>
<rect x="245.2" y="55.5" width="26" height="9.5" fill="#d2d2d2"/><rect x="245.2" y="55.5" width="26" height="1.2" fill="#6a6a6a"/><rect x="246.1" y="56.5" width="24.2" height="6.7" fill="#141214"/><rect x="248.2" y="60.0" width="20" height="1.5" fill="#4d4660"/><rect x="246.7" y="61.8" width="23" height="1.2" fill="#3a3a3a"/><rect x="245.2" y="63.1" width="26" height="1.9" fill="#a898ac"/><rect x="245.2" y="63.1" width="26" height="0.8" fill="#dcd6dc"/>
<rect x="272.3" y="55.5" width="26" height="9.5" fill="#d2d2d2"/><rect x="272.3" y="55.5" width="26" height="1.2" fill="#6a6a6a"/><rect x="273.2" y="56.5" width="24.2" height="6.7" fill="#141214"/><rect x="275.3" y="60.0" width="20" height="1.5" fill="#4d4660"/><rect x="273.8" y="61.8" width="23" height="1.2" fill="#3a3a3a"/><rect x="272.3" y="63.1" width="26" height="1.9" fill="#a898ac"/><rect x="272.3" y="63.1" width="26" height="0.8" fill="#dcd6dc"/>
<text x="193" y="70.8" font-family="Liberation Sans, sans-serif" text-anchor="middle" font-size="6.2" fill="#766e75">SAS</text>
<text x="193" y="76" font-family="Liberation Sans, sans-serif" text-anchor="middle" font-size="5.8" fill="#766e75">B0</text>
<text x="220" y="70.8" font-family="Liberation Sans, sans-serif" text-anchor="middle" font-size="6.2" fill="#766e75">SAS</text>
<text x="220" y="76" font-family="Liberation Sans, sans-serif" text-anchor="middle" font-size="5.8" fill="#766e75">B1</text>
<text x="250.7" y="70.8" font-family="Liberation Sans, sans-serif" text-anchor="middle" font-size="6.2" fill="#766e75">SAS</text>
<text x="250.7" y="76" font-family="Liberation Sans, sans-serif" text-anchor="middle" font-size="5.8" fill="#766e75">B2</text>
<text x="278" y="70.8" font-family="Liberation Sans, sans-serif" text-anchor="middle" font-size="6.2" fill="#766e75">SAS</text>
<text x="278" y="76" font-family="Liberation Sans, sans-serif" text-anchor="middle" font-size="5.8" fill="#766e75">B3</text>
<text x="168.1" y="86.5" font-family="Liberation Sans, sans-serif" text-anchor="middle" font-size="7.5" fill="#5d4f5e">B</text>
<rect x="299" y="80.5" width="15.5" height="13" fill="#f2f2f2"/><path d="M300.5,82 h12.5 v10 h-3 v1.5 h-6.5 v-1.5 h-3 z" fill="#14161c"/><rect x="303.5" y="85.5" width="6.5" height="3.5" fill="#39425a" opacity=".8"/>
<text x="306" y="98.6" font-family="Liberation Sans, sans-serif" text-anchor="middle" font-size="6" fill="#787d86">192.168.0.117</text>
<text x="346.7" y="81" font-family="Liberation Sans, sans-serif" text-anchor="middle" font-size="6" fill="#6e6e6e">Out 0</text>
<rect x="335.2" y="84.8" width="26" height="9" fill="#d2d2d2"/><rect x="335.2" y="84.8" width="26" height="1.2" fill="#6a6a6a"/><rect x="336.09999999999997" y="85.8" width="24.2" height="6.2" fill="#141214"/><rect x="338.2" y="88.8" width="20" height="1.5" fill="#4d4660"/><rect x="336.7" y="90.6" width="23" height="1.2" fill="#3a3a3a"/><rect x="335.2" y="91.89999999999999" width="26" height="1.9" fill="#a898ac"/><rect x="335.2" y="91.89999999999999" width="26" height="0.8" fill="#dcd6dc"/>
<rect x="0" y="0" width="543.6" height="2.3" fill="#b2b2b2"/><rect x="0" y="0" width="543.6" height="1" fill="#8c8c8c"/><rect x="20" y="2.3" width="504" height="0.9" fill="#3a3a3a" opacity=".7"/>
</svg>
<div id="pop"><div class="h">Controller Information</div>
<div class="row" style="top:22.8px">ID:</div><div class="val" style="top:22.8px">B</div>
<div class="row" style="top:36.5px">IP Address:</div><div class="val" style="top:36.5px">192.168.0.117</div>
<div class="row" style="top:50.2px">Description:</div><div class="val" style="top:50.2px">HP MSA 2040 SAS Controller</div>
<div class="row" style="top:63.9px">Status:</div><div class="val" style="top:63.9px">Operational</div>
<div class="row" style="top:77.6px">Model:</div><div class="val" style="top:77.6px">DH4524</div>
<div class="row" style="top:91.3px">Serial Number:</div><div class="val" style="top:91.3px">3CL351JF52</div>
<div class="row" style="top:105.0px">Hardware Version:</div><div class="val" style="top:105.0px">4.2</div>
<div class="row" style="top:118.7px">System Cache Memory (MB):</div><div class="val" style="top:118.7px">6144</div>
<div class="row" style="top:132.4px">Revision:</div><div class="val" style="top:132.4px"></div>

<svg style="position:absolute;left:6.7px;top:149px" width="12" height="12" viewBox="0 0 12 12"><circle cx="6" cy="6" r="5.2" fill="#3aa63a" stroke="#2a7d2a" stroke-width=".6"/><path d="M3.2,6.2 L5.2,8.2 L8.8,4" fill="none" stroke="#fff" stroke-width="1.5"/></svg>
<div style="position:absolute;left:21.7px;top:149.3px;font-size:8.8px;line-height:10px;color:#2a2a2a">OK</div>
</div>
</body></html>
